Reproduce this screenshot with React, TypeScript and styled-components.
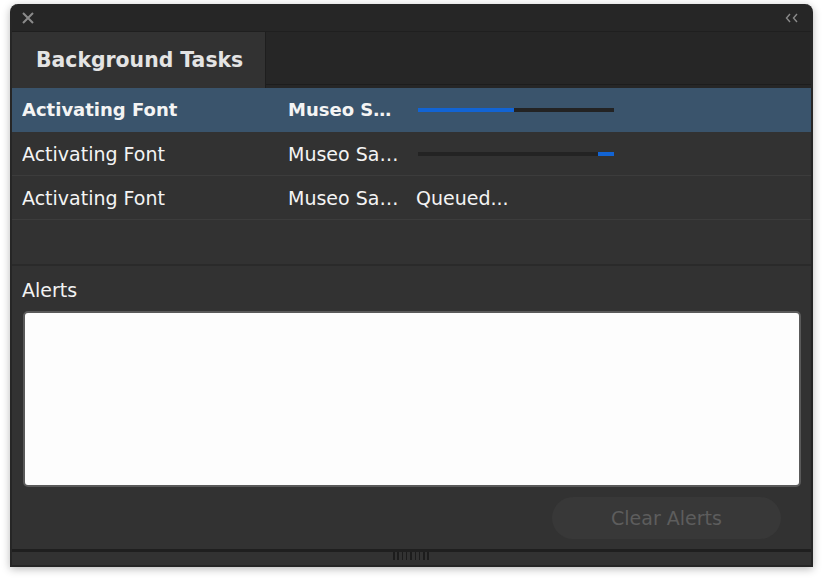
import React from "react";
import styled, { createGlobalStyle } from "styled-components";

const GlobalStyle = createGlobalStyle`
  html, body {
    margin: 0;
    background: #ffffff;
  }
  body {
    font-family: "DejaVu Sans", "Liberation Sans", sans-serif;
  }
`;

interface Task {
    id: string;
    action: string;
    font: string;
    status: "progress" | "queued";
    offset?: number;
    value?: number;
}

const tasks: Task[] = [
    { id: "1", action: "Activating Font", font: "Museo Sans 500", status: "progress", offset: 0, value: 0.49 },
    { id: "2", action: "Activating Font", font: "Museo Sans 700", status: "progress", offset: 0.92, value: 0.08 },
    { id: "3", action: "Activating Font", font: "Museo Sans 300", status: "queued" },
];

const Page = styled.div`
  padding: 4px 11px 13px 10px;
`;

const Window = styled.div`
  display: flex;
  flex-direction: column;
  height: 563px;
  box-sizing: border-box;
  background: #262626;
  border: 2px solid #262626;
  border-top: none;
  border-radius: 8px 8px 0 0;
  box-shadow: 0 2px 9px rgba(0, 0, 0, 0.28);
  overflow: hidden;
`;

const TitleBar = styled.div`
  height: 28px;
  flex: none;
  display: flex;
  align-items: center;
  justify-content: space-between;
  padding: 0 12px 0 9px;
  border-bottom: 1px solid #1f1f1f;
  box-sizing: border-box;
`;

const IconButton = styled.span`
  display: flex;
  align-items: center;
  color: #8a8a8a;
`;

const TabStrip = styled.div`
  height: 56px;
  flex: none;
  display: flex;
`;

const Tab = styled.div<{ $active?: boolean }>`
  width: 254px;
  display: flex;
  align-items: center;
  padding-left: 24px;
  box-sizing: border-box;
  background: ${({ $active }) => ($active ? "#323232" : "#262626")};
  border-right: 1px solid #1e1e1e;
  color: #e4e4e4;
  font-size: 20.4px;
  font-weight: 700;
`;

const TabFiller = styled.div`
  flex: 1;
  border-bottom: 1px solid #1d1d1d;
  margin-bottom: 3px;
`;

const List = styled.div`
  flex: none;
  background: #323232;
  border-bottom: 2px solid #2a2a2a;
`;

const Row = styled.div<{ $selected?: boolean }>`
  height: 44px;
  box-sizing: border-box;
  display: grid;
  grid-template-columns: 266px 128px 1fr;
  align-items: center;
  padding-left: 10px;
  background: ${({ $selected }) => ($selected ? "#3a546c" : "#323232")};
  border-bottom: 1px solid ${({ $selected }) => ($selected ? "#3a546c" : "#3c3c3c")};
  color: #f4f4f4;
  font-size: ${({ $selected }) => ($selected ? "18px" : "19px")};
  font-weight: ${({ $selected }) => ($selected ? 700 : 400)};
  white-space: nowrap;
`;

const EmptyRow = styled.div`
  height: 44px;
`;

const Cell = styled.div`
  min-width: 0;
  overflow: hidden;
  text-overflow: ellipsis;
  padding-right: 14px;
`;

const Track = styled.div`
  width: 196px;
  height: 4px;
  margin-left: 2px;
  background: #232323;
  display: flex;
`;

const Fill = styled.div`
  height: 100%;
  background: #1264d4;
`;

const AlertsSection = styled.div`
  flex: 1;
  display: flex;
  flex-direction: column;
  padding: 12px 10px 10px 11px;
  background: #323232;
`;

const SectionLabel = styled.div`
  color: #f2f2f2;
  font-size: 19px;
  line-height: 24px;
  margin-bottom: 9px;
  margin-left: -1px;
`;

const AlertBox = styled.div`
  height: 176px;
  box-sizing: border-box;
  background: #fdfdfd;
  border: 2px solid #5a5a5a;
  border-radius: 5px;
`;

const Actions = styled.div`
  display: flex;
  justify-content: flex-end;
  padding: 10px 20px 0 0;
`;

const PillButton = styled.button`
  width: 229px;
  height: 42px;
  border: none;
  border-radius: 21px;
  background: #383838;
  color: #5d5d5d;
  font-family: inherit;
  font-size: 19px;
`;

const Divider = styled.div`
  height: 3px;
  flex: none;
  background: #1f1f1f;
`;

const GripBar = styled.div`
  height: 14px;
  flex: none;
  display: flex;
  justify-content: center;
  background: #323232;
`;

const Grip = styled.div`
  width: 38px;
  height: 8px;
  background: repeating-linear-gradient(90deg, #1c1c1c 0 1.5px, transparent 1.5px 4.3px);
`;

const CloseIcon = () => (
    <svg width="14" height="14" viewBox="0 0 14 14">
        <path d="M2 2 L12 12 M12 2 L2 12" stroke="currentColor" strokeWidth="2" />
    </svg>
);

const CollapseIcon = () => (
    <svg width="14" height="10" viewBox="0 0 14 10">
        <path d="M5 1 L1.5 5 L5 9 M12 1 L8.5 5 L12 9" stroke="currentColor" strokeWidth="1.4" fill="none" />
    </svg>
);

const TaskRow = ({ task, selected }: { task: Task; selected?: boolean }) => (
    <Row $selected={selected}>
        <Cell>{task.action}</Cell>
        <Cell>{task.font}</Cell>
        {task.status === "queued" ? (
            <Cell>Queued...</Cell>
        ) : (
            <Track>
                <Fill style={{ marginLeft: `${(task.offset || 0) * 100}%`, width: `${(task.value || 0) * 100}%` }} />
            </Track>
        )}
    </Row>
);

export default function App() {
    return (
        <>
            <GlobalStyle />
            <Page>
                <Window>
                    <TitleBar>
                        <IconButton><CloseIcon /></IconButton>
                        <IconButton><CollapseIcon /></IconButton>
                    </TitleBar>
                    <TabStrip>
                        <Tab $active>Background Tasks</Tab>
                        <TabFiller />
                    </TabStrip>
                    <List>
                        {tasks.map((t, i) => (
                            <TaskRow key={t.id} task={t} selected={i === 0} />
                        ))}
                        <EmptyRow />
                    </List>
                    <AlertsSection>
                        <SectionLabel>Alerts</SectionLabel>
                        <AlertBox />
                        <Actions>
                            <PillButton disabled>Clear Alerts</PillButton>
                        </Actions>
                    </AlertsSection>
                    <Divider />
                    <GripBar>
                        <Grip />
                    </GripBar>
                </Window>
            </Page>
        </>
    );
}
